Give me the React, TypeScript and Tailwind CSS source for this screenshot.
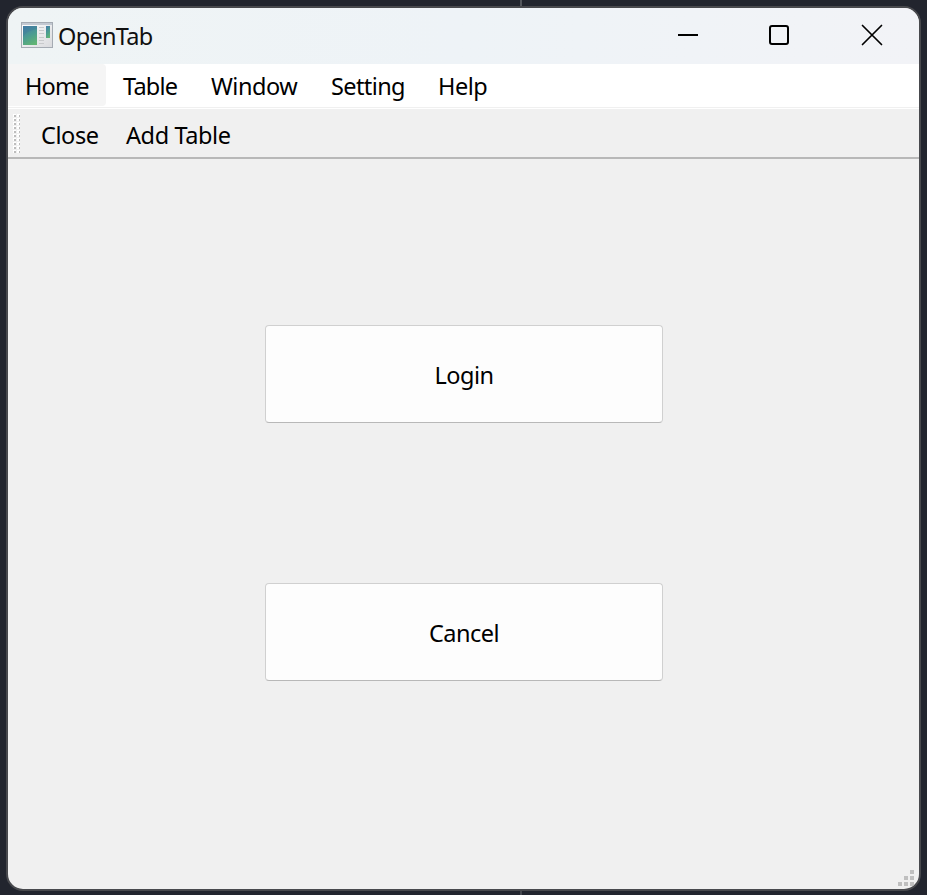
import React from "react";

const menus = [
  { label: "Home", cell: "w-[98px] rounded-r-[4px] bg-[#f5f5f5] tracking-[-0.8px]" },
  { label: "Table", cell: "w-[88px] tracking-[-0.8px]" },
  { label: "Window", cell: "w-[120px] tracking-[-0.5px]" },
  { label: "Setting", cell: "w-[107px] tracking-[-0.6px]" },
  { label: "Help", cell: "w-[84px] tracking-[-0.5px]" },
];

function AppIcon() {
  return (
    <svg width="32" height="26" viewBox="0 0 32 26" className="-mt-[2px] shrink-0">
      <defs>
        <linearGradient id="pane" x1="0.3" y1="0" x2="0.7" y2="1">
          <stop offset="0" stopColor="#467fa6" />
          <stop offset="0.5" stopColor="#4b9d91" />
          <stop offset="1" stopColor="#62b573" />
        </linearGradient>
        <linearGradient id="frame" x1="0" y1="0" x2="1" y2="1">
          <stop offset="0" stopColor="#ffffff" />
          <stop offset="1" stopColor="#d9dadd" />
        </linearGradient>
      </defs>
      <rect x="0.5" y="0.5" width="31" height="25" fill="url(#frame)" stroke="#a5abb3" />
      <rect x="1" y="1" width="30" height="2" fill="#c3c9d2" />
      <rect x="2" y="4" width="14" height="19" fill="url(#pane)" />
      <path d="M2 15Q5 9 16 7V4H2Z" fill="#3b779c" opacity="0.35" />
      <path d="M18 5.500h5M18 8.500h5M18 11.500h5M18 15.500h5M18 18.500h5M18 21.500h5" stroke="#c8cacc" />
      <rect x="25" y="4" width="4" height="12" fill="url(#pane)" />
    </svg>
  );
}

function PushButton({ children }: { children: React.ReactNode }) {
  return (
    <button className="flex h-[98px] w-[398px] items-center justify-center rounded-[4px] border border-[#d0d0d0] border-b-[#b8b8b8] bg-[#fdfdfd] pl-px pt-px tracking-[-0.55px]">
      {children}
    </button>
  );
}

export default function App() {
  return (
    <div className="flex h-[895px] w-[927px] flex-col items-center overflow-hidden bg-[#22252e] font-['Noto_Sans','Open_Sans',sans-serif] text-[23.5px] leading-[32px] text-black">
      <div className="flex h-[6px] w-full shrink-0 pl-[520px]">
        <div className="w-[2px] bg-[#53565c]" />
      </div>
      <div className="flex h-[885px] w-[915px] shrink-0 flex-col overflow-hidden rounded-[17px] border-2 border-[#48494d] bg-[#f0f0f0]">
        <header className="flex h-[56px] shrink-0 items-center bg-linear-to-r from-[#eff4f5] via-[#eef3f7] to-[#f2f3f7] pl-[13px]">
          <AppIcon />
          <span className="ml-[5px] w-[120px] tracking-[-0.7px] text-[#101010]">OpenTab</span>
          <svg width="206" height="24" viewBox="0 0 206 24" className="ml-[499px] shrink-0" fill="none" stroke="#000">
            <path d="M1 11h20" strokeWidth="2" />
            <rect x="93" y="2" width="18" height="18" rx="2" strokeWidth="2" />
            <path d="M185.500 1.500l19 19M204.500 1.500l-19 19" strokeWidth="1.700" strokeLinecap="round" />
          </svg>
        </header>
        <nav className="flex h-[43px] shrink-0 bg-white">
          {menus.map((m) => (
            <div key={m.label} className={`h-[42px] shrink-0 whitespace-nowrap pl-[17px] pt-[6px] ${m.cell}`}>
              {m.label}
            </div>
          ))}
        </nav>
        <div className="h-[2px] shrink-0 border-b border-white bg-[#f0f0f0]" />
        <div className="flex h-[50px] shrink-0 border-b-2 border-[#b8b8b8] pl-[5px]">
          <svg width="7" height="39" viewBox="0 0 7 39" className="mt-[5px] shrink-0">
            {Array.from({ length: 10 }, (_, i) => (
              <g key={i}>
                <rect y={i * 4} width="3" height="3" fill="#fff" />
                <rect x="1" y={i * 4 + 1} width="2" height="2" fill="#bdbdbd" />
                <rect x="4" y={i * 4} width="3" height="3" fill="#fff" />
                <rect x="6" y={i * 4 + 1} width="1" height="2" fill="#bdbdbd" />
              </g>
            ))}
          </svg>
          <span className="ml-[21px] w-[85px] pt-[10px] tracking-[-0.4px]">Close</span>
          <span className="whitespace-nowrap pt-[10px] tracking-[-0.4px]">Add Table</span>
        </div>
        <main className="flex flex-1 flex-col items-center gap-[160px] pt-[166px]">
          <PushButton>Login</PushButton>
          <PushButton>Cancel</PushButton>
          <svg width="18" height="18" viewBox="0 0 18 18" className="-mt-[130px] mr-[3px] translate-y-[159px] self-end" fill="#bfbfbf">
            <path d="M12 0h4v4h-4zM6 6h4v4H6zM12 6h4v4h-4zM0 12h4v4H0zM6 12h4v4H6zM12 12h4v4h-4z" />
          </svg>
        </main>
      </div>
      <div className="flex w-full flex-1 pl-[520px]">
        <div className="w-[2px] bg-[#45484f]" />
      </div>
    </div>
  );
}
